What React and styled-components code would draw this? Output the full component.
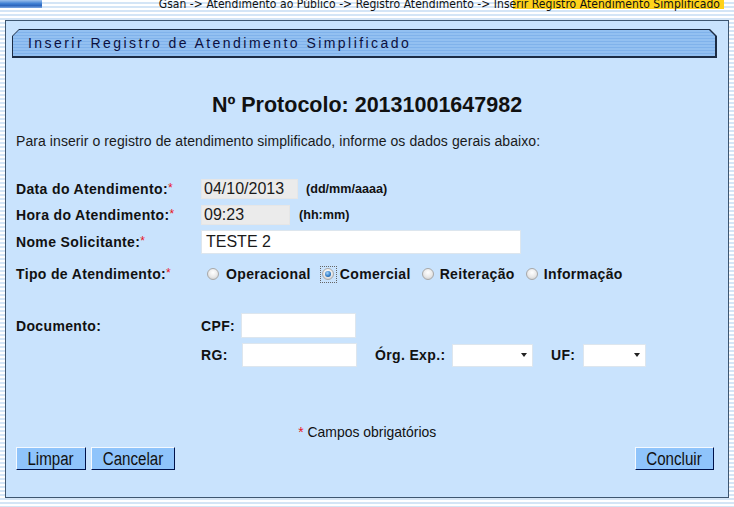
import styled, { createGlobalStyle } from "styled-components";

const GlobalStyle = createGlobalStyle`
  html, body {
    margin: 0;
    padding: 0;
  }
  body {
    width: 734px;
    height: 507px;
    overflow: hidden;
    font-family: "Liberation Sans", Arial, sans-serif;
    background: repeating-linear-gradient(
      to bottom,
      #ffffff 0px,
      #ffffff 2px,
      #d4e5f6 2px,
      #d4e5f6 4px
    );
  }
`;

const condensed = `"DejaVu Sans Condensed", "DejaVu Sans", sans-serif`;

const TopStrip = styled.div`
  height: 20px;
  display: flex;
  justify-content: space-between;
  align-items: flex-start;
`;

const BlueTab = styled.div`
  width: 42px;
  height: 8px;
  background: linear-gradient(to bottom, #9cc0ec 0%, #3f7fd3 45%, #2d66bd 70%, #7ea9e4 100%);
`;

const Breadcrumb = styled.div`
  position: relative;
  margin-top: -2px;
  margin-right: 14px;
  font-family: ${condensed};
  font-stretch: condensed;
  font-size: 12px;
  letter-spacing: 0.05px;
  line-height: 13px;
  color: #111;
  white-space: nowrap;
`;

const Highlight = styled.span`
  position: absolute;
  right: -4px;
  top: 0;
  width: 211px;
  height: 11px;
  background: #ffd21a;
  z-index: 0;
`;

const CrumbText = styled.span`
  position: relative;
  z-index: 1;
`;

const Panel = styled.div`
  margin: 0 5px;
  height: 478px;
  box-sizing: border-box;
  border: 1px solid #3e5670;
  background: #c9e3fd;
  display: flex;
  flex-direction: column;
`;

const HeaderOuter = styled.div`
  margin: 8px 11px 0 6px;
  height: 29px;
  background: #1c2c44;
  clip-path: polygon(7px 0, calc(100% - 7px) 0, 100% 7px, 100% 100%, 0 100%, 0 7px);
  padding: 1px 2px 2px 1px;
  box-sizing: border-box;
`;

const HeaderInner = styled.div`
  height: 100%;
  clip-path: polygon(6px 0, calc(100% - 6px) 0, 100% 6px, 100% 100%, 0 100%, 0 6px);
  background: repeating-linear-gradient(
    to bottom,
    #93c0f1 0px,
    #93c0f1 2px,
    #80b2eb 2px,
    #80b2eb 3px
  );
  display: flex;
  align-items: center;
  padding-left: 15px;
  font-size: 14px;
  letter-spacing: 2.45px;
  color: #0c1040;
`;

const Content = styled.div`
  padding: 0 10px;
  display: flex;
  flex-direction: column;
  flex: 1;
`;

const Title = styled.h1`
  margin: 35px 0 0;
  text-align: center;
  font-size: 21.5px;
  line-height: 24px;
  font-weight: bold;
  color: #111;
`;

const Intro = styled.p`
  margin: 16px 0 0;
  font-size: 14px;
  letter-spacing: 0.08px;
  line-height: 16px;
  color: #1a1a1a;
`;

const Row = styled.div`
  display: flex;
  align-items: center;
  height: ${(p) => p.$h}px;
  margin-top: ${(p) => p.$mt || 0}px;
`;

const Label = styled.span`
  width: ${(p) => p.$w || 185}px;
  flex-shrink: 0;
  font-size: 14px;
  letter-spacing: 0.35px;
  font-weight: bold;
  color: #111;
  margin-left: ${(p) => p.$ml || 0}px;
`;

const Star = styled.span`
  color: #e8141c;
  font-weight: normal;
  vertical-align: 2px;
  font-size: 12px;
  letter-spacing: 0;
`;

const TextBox = styled.div`
  box-sizing: border-box;
  width: ${(p) => p.$w}px;
  height: ${(p) => p.$h}px;
  background: ${(p) => (p.$readonly ? "#ebebeb" : "#ffffff")};
  border: 1px solid ${(p) => (p.$readonly ? "#e6e6e6" : "#dde6ee")};
  font-size: 16px;
  color: #1a1a1a;
  display: flex;
  align-items: center;
  padding-left: ${(p) => (p.$readonly ? 2 : 4)}px;
  flex-shrink: 0;
`;

const Hint = styled.span`
  margin-left: ${(p) => p.$ml}px;
  font-size: 12.6px;
  font-weight: bold;
  color: #111;
`;

const RadioGroup = styled.div`
  display: flex;
  align-items: center;
  margin-left: 4px;
`;

const RadioItem = styled.label`
  display: flex;
  align-items: center;
  margin-right: 10px;
  font-size: 14px;
  letter-spacing: 0.35px;
  font-weight: bold;
  color: #111;
`;

const RadioWrap = styled.span`
  display: inline-flex;
  align-items: center;
  justify-content: center;
  width: 15px;
  height: 15px;
  margin-right: ${(p) => (p.$first ? 6 : 4)}px;
  box-sizing: border-box;
  outline: ${(p) => (p.$focus ? "1px dotted #666" : "none")};
`;

const RadioDot = styled.span`
  width: 12px;
  height: 12px;
  border-radius: 50%;
  box-sizing: border-box;
  border: 1px solid #a8a8a8;
  background: radial-gradient(circle at 50% 35%, #ffffff 0%, #e8e8e8 55%, #c6c6c6 100%);
  display: flex;
  align-items: center;
  justify-content: center;
  &::after {
    content: "";
    display: ${(p) => (p.$checked ? "block" : "none")};
    width: 6px;
    height: 6px;
    border-radius: 50%;
    background: radial-gradient(circle at 40% 35%, #a6d6ff 0%, #2a78c4 60%, #0f4684 100%);
  }
`;

const Select = styled.div`
  box-sizing: border-box;
  width: ${(p) => p.$w}px;
  height: 23px;
  background: #ffffff;
  border: 1px solid #dde6ee;
  display: flex;
  justify-content: flex-end;
  align-items: center;
  padding-right: 5px;
  flex-shrink: 0;
  &::after {
    content: "";
    border-left: 3.5px solid transparent;
    border-right: 3.5px solid transparent;
    border-top: 4px solid #222;
  }
`;

const Required = styled.div`
  margin-top: 54px;
  text-align: center;
  font-size: 15px;
  line-height: 18px;
  color: #111;
`;

const Squeeze = styled.span`
  display: inline-block;
  transform: scaleX(${(p) => p.$x});
`;

const RedStar = styled.span`
  color: #e8141c;
`;

const Buttons = styled.div`
  display: flex;
  align-items: center;
  margin-top: 6px;
  gap: 5px;
  padding-right: 4px;
`;

const Button = styled.button`
  box-sizing: border-box;
  width: ${(p) => p.$w}px;
  height: 23px;
  padding: 0;
  background: #8fc4fb;
  border-style: solid;
  border-width: 1px;
  border-color: #f4f9ff #00124a #00124a #f4f9ff;
  font-family: "Liberation Sans", Arial, sans-serif;
  font-size: 18px;
  line-height: 20px;
  color: #111;
  white-space: nowrap;
  overflow: hidden;
  margin-left: ${(p) => (p.$right ? "auto" : "0")};
`;

const Radio = ({ label, checked, first }) => (
  <RadioItem>
    <RadioWrap $focus={checked} $first={first}>
      <RadioDot $checked={checked} />
    </RadioWrap>
    {label}
  </RadioItem>
);

export default function App() {
  return (
    <>
      <GlobalStyle />
      <TopStrip>
        <BlueTab />
        <Breadcrumb>
          <Highlight />
          <CrumbText>
            Gsan -&gt; Atendimento ao Público -&gt; Registro Atendimento -&gt; Inserir Registro Atendimento Simplificado
          </CrumbText>
        </Breadcrumb>
      </TopStrip>
      <Panel>
        <HeaderOuter>
          <HeaderInner>Inserir Registro de Atendimento Simplificado</HeaderInner>
        </HeaderOuter>
        <Content>
          <Title>Nº Protocolo: 20131001647982</Title>
          <Intro>
            Para inserir o registro de atendimento simplificado, informe os dados gerais abaixo:
          </Intro>

          <Row $h={25} $mt={27}>
            <Label>
              Data do Atendimento:<Star>*</Star>
            </Label>
            <TextBox $readonly $w={97} $h={20}>
              04/10/2013
            </TextBox>
            <Hint $ml={8}>(dd/mm/aaaa)</Hint>
          </Row>
          <Row $h={27}>
            <Label>
              Hora do Atendimento:<Star>*</Star>
            </Label>
            <TextBox $readonly $w={89} $h={20}>
              09:23
            </TextBox>
            <Hint $ml={9}>(hh:mm)</Hint>
          </Row>
          <Row $h={28}>
            <Label>
              Nome Solicitante:<Star>*</Star>
            </Label>
            <TextBox $w={320} $h={24}>
              TESTE 2
            </TextBox>
          </Row>
          <Row $h={36}>
            <Label>
              Tipo de Atendimento:<Star>*</Star>
            </Label>
            <RadioGroup>
              <Radio label="Operacional" first />
              <Radio label="Comercial" checked />
              <Radio label="Reiteração" />
              <Radio label="Informação" />
            </RadioGroup>
          </Row>

          <Row $h={27} $mt={20}>
            <Label>Documento:</Label>
            <Label $w={40}>CPF:</Label>
            <TextBox $w={115} $h={25} />
          </Row>
          <Row $h={28} $mt={2}>
            <Label />
            <Label $w={41}>RG:</Label>
            <TextBox $w={115} $h={24} />
            <Label $w={77} $ml={18}>
              Órg. Exp.:
            </Label>
            <Select $w={81} />
            <Label $w={32} $ml={18}>
              UF:
            </Label>
            <Select $w={63} />
          </Row>

          <Required>
            <Squeeze $x={0.93}>
              <RedStar>*</RedStar> Campos obrigatórios
            </Squeeze>
          </Required>
          <Buttons>
            <Button $w={70}>
              <Squeeze $x={0.84}>Limpar</Squeeze>
            </Button>
            <Button $w={84}>
              <Squeeze $x={0.84}>Cancelar</Squeeze>
            </Button>
            <Button $w={79} $right>
              <Squeeze $x={0.84}>Concluir</Squeeze>
            </Button>
          </Buttons>
        </Content>
      </Panel>
    </>
  );
}
